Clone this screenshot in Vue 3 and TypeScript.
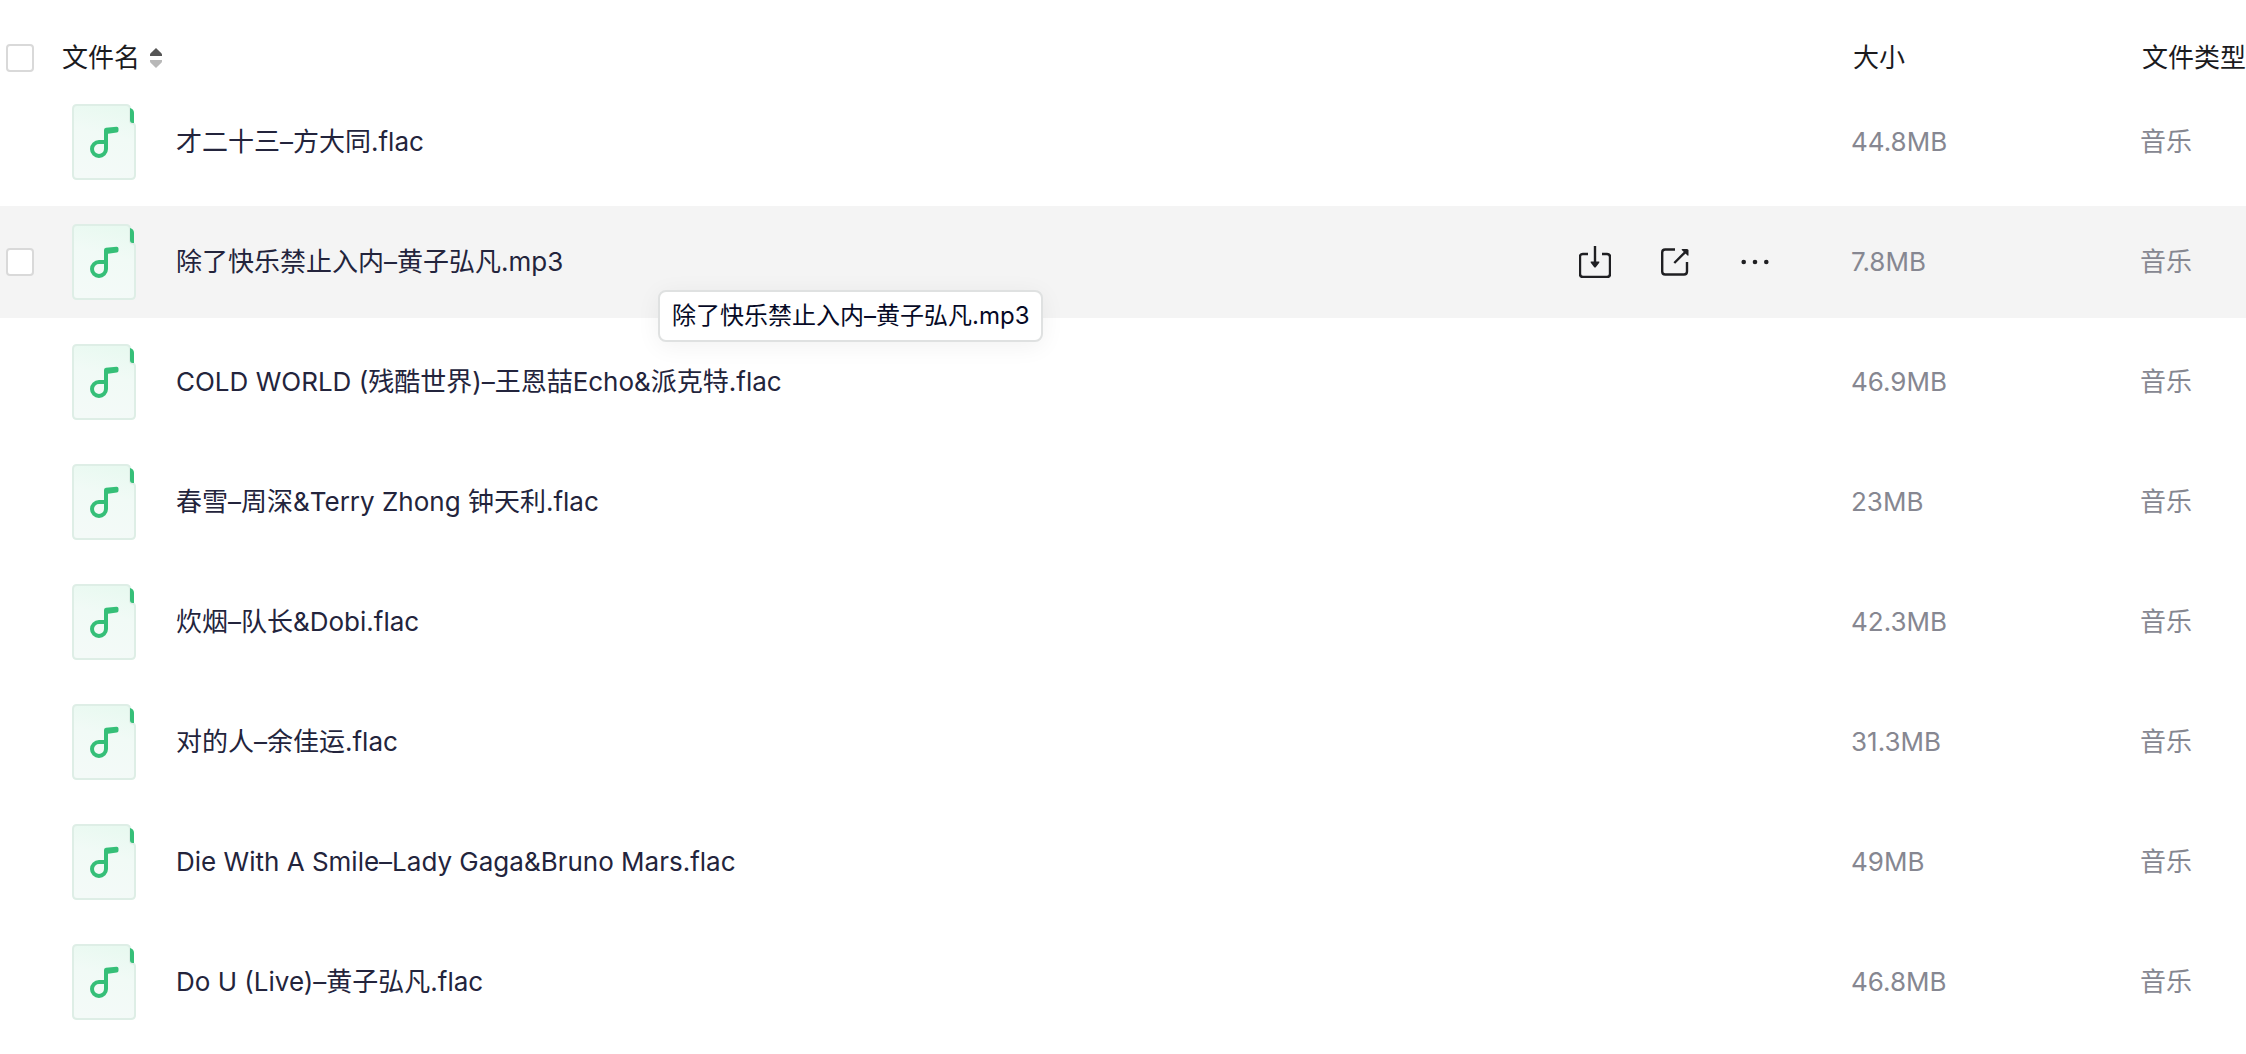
<script setup lang="ts">
import { ref } from 'vue'

interface FileRow {
  id: number
  name: string
  size: string
  type: string
}

const files: FileRow[] = [
  { id: 1, name: '才二十三–方大同.flac', size: '44.8MB', type: '音乐' },
  { id: 2, name: '除了快乐禁止入内–黄子弘凡.mp3', size: '7.8MB', type: '音乐' },
  { id: 3, name: 'COLD WORLD (残酷世界)–王恩喆Echo&派克特.flac', size: '46.9MB', type: '音乐' },
  { id: 4, name: '春雪–周深&Terry Zhong 钟天利.flac', size: '23MB', type: '音乐' },
  { id: 5, name: '炊烟–队长&Dobi.flac', size: '42.3MB', type: '音乐' },
  { id: 6, name: '对的人–余佳运.flac', size: '31.3MB', type: '音乐' },
  { id: 7, name: 'Die With A Smile–Lady Gaga&Bruno Mars.flac', size: '49MB', type: '音乐' },
  { id: 8, name: 'Do U (Live)–黄子弘凡.flac', size: '46.8MB', type: '音乐' },
]

const activeId = ref(2)
const selected = ref<number[]>([])

function toggleAll(event: Event) {
  const checked = (event.target as HTMLInputElement).checked
  selected.value = checked ? files.map((f) => f.id) : []
}
</script>

<template>
  <main class="file-list">
    <table>
      <colgroup>
        <col class="col-check" />
        <col />
        <col class="col-size" />
        <col class="col-type" />
      </colgroup>
      <thead>
        <tr>
          <th class="check-cell">
            <input
              type="checkbox"
              aria-label="全选"
              :checked="selected.length === files.length"
              @change="toggleAll"
            />
          </th>
          <th>
            <button class="sort" type="button">
              文件名
              <svg width="12" height="20" viewBox="0 0 12 20" aria-hidden="true">
                <path d="M6 0 11.4 5.2Q12 6 12 7v1H0V7Q0 6 .6 5.2Z" fill="#555" />
                <path d="M6 20 11.4 14.8Q12 14 12 13v-1H0v1q0 1 .6 1.8Z" fill="#b8b8b8" />
              </svg>
            </button>
          </th>
          <th class="head-size">大小</th>
          <th class="head-type">文件类型</th>
        </tr>
      </thead>
      <tbody>
        <tr
          v-for="file in files"
          :key="file.id"
          :class="{ active: file.id === activeId }"
          @mouseenter="activeId = file.id"
        >
          <td class="check-cell">
            <input
              v-if="file.id === activeId || selected.includes(file.id)"
              v-model="selected"
              type="checkbox"
              :value="file.id"
              :aria-label="file.name"
            />
          </td>
          <td>
            <div class="file">
              <svg class="file-icon" width="64" height="76" viewBox="0 0 64 76" aria-hidden="true">
                <defs>
                  <linearGradient :id="`paper-${file.id}`" x1="0.6" y1="0" x2="0.4" y2="1">
                    <stop offset="0" stop-color="#e8f9f0" />
                    <stop offset="0.4" stop-color="#f1faf6" />
                    <stop offset="1" stop-color="#f4faf8" />
                  </linearGradient>
                </defs>
                <path
                  d="M5 1H54q4 0 4 4V16q0 3.500 3 3.500 2 .5 2 3V71q0 4-4 4H5q-4 0-4-4V5q0-4 4-4Z"
                  :fill="`url(#paper-${file.id})`"
                  stroke="#deeee6"
                  stroke-width="2"
                />
                <path d="M58 4q4 1 4 5V19H60.500Q58 19 58 16Z" fill="#36bf78" />
                <path
                  d="M34 45a7 7 0 1 1-7-7h7Z"
                  fill="none"
                  stroke="#36bf78"
                  stroke-width="4"
                />
                <path
                  d="M32 45V26q0-2 2-2.200L44.500 22.800Q46.500 22.700 46.500 24.500V26.500Q46.500 28.300 44.800 28.500L36 29.700V45Z"
                  fill="#36bf78"
                />
              </svg>
              <span class="file-name">{{ file.name }}</span>
              <div v-if="file.id === activeId" class="actions">
                <button type="button" aria-label="下载">
                  <svg width="32" height="32" viewBox="0 0 32 32">
                    <path
                      d="M9 8H4Q1 8 1 11V28q0 3 3 3H28q3 0 3-3V11q0-3-3-3H23M16 0V17"
                      fill="none"
                      stroke="#1f1f22"
                      stroke-width="2.400"
                    />
                    <path d="M12.300 15.500h7.400q1.300 0 .5 1.200L17 20.900q-1 1.200-2 0L11.800 16.700q-.8-1.200.5-1.200Z" fill="#1f1f22" />
                  </svg>
                </button>
                <button type="button" aria-label="分享">
                  <svg width="32" height="32" viewBox="0 0 32 32">
                    <path
                      d="M16 3.500H6.200q-3 0-3 3V25.500q0 3 3 3H25q3 0 3-3V16M15.300 17 27 5.300"
                      fill="none"
                      stroke="#1f1f22"
                      stroke-width="2.400"
                    />
                    <path d="M23.300 3H28q1.500 0 1.500 1.500V9q0 1.200-1 .4L22.800 4q-.6-1 .5-1Z" fill="#1f1f22" />
                  </svg>
                </button>
                <button type="button" aria-label="更多">
                  <svg width="32" height="32" viewBox="0 0 32 32" fill="#1f1f22">
                    <circle cx="4.700" cy="16" r="2.300" />
                    <circle cx="16" cy="16" r="2.300" />
                    <circle cx="27.300" cy="16" r="2.300" />
                  </svg>
                </button>
              </div>
              <div v-if="file.id === activeId" class="tooltip" role="tooltip">{{ file.name }}</div>
            </div>
          </td>
          <td class="meta">{{ file.size }}</td>
          <td class="meta">{{ file.type }}</td>
        </tr>
      </tbody>
    </table>
  </main>
</template>

<style>
body {
  margin: 0;
  background: #fff;
}
</style>

<style scoped>
.file-list {
  overflow-x: hidden;
  font-family: Inter, "Noto Sans CJK SC", sans-serif;
  font-size: 26px;
  line-height: 40px;
  color: #23243c;
}

table {
  width: 100%;
  table-layout: fixed;
  border-collapse: separate;
  border-spacing: 0 8px;
}

.col-check {
  width: 62px;
}

.col-size {
  width: 289px;
}

.col-type {
  width: 106px;
}

th,
td {
  padding: 0;
  text-align: left;
  font-weight: 400;
  white-space: nowrap;
}

th {
  height: 40px;
  padding-top: 30px;
  color: #1b1b1e;
}

.head-size,
.head-type {
  padding-left: 2px;
}

td {
  height: 112px;
}

.active td {
  background: #f4f4f4;
}

.check-cell {
  padding-left: 6px;
}

input[type='checkbox'] {
  display: block;
  box-sizing: border-box;
  width: 28px;
  height: 28px;
  margin: 0;
  appearance: none;
  background: #fff;
  border: 2px solid #d9d9d9;
  border-radius: 4px;
}

input[type='checkbox']:checked {
  background: #36bf78;
  border-color: #36bf78;
}

button {
  padding: 0;
  border: 0;
  background: none;
  font: inherit;
  color: inherit;
  cursor: pointer;
}

.sort {
  display: flex;
  align-items: center;
  gap: 10px;
}

.file {
  position: relative;
  display: flex;
  align-items: center;
  padding: 0 56px 0 10px;
}

.file-icon {
  flex: none;
  margin-right: 40px;
}

.file-name {
  flex: 1;
  overflow: hidden;
  text-overflow: ellipsis;
}

.actions {
  display: flex;
}

.actions button {
  display: flex;
  align-items: center;
  justify-content: center;
  width: 80px;
  height: 40px;
}

.tooltip {
  position: absolute;
  top: 66px;
  left: 596px;
  z-index: 1;
  padding: 4px 12px;
  border: 2px solid #dfe1e1;
  border-radius: 8px;
  background: #fff;
  box-shadow: 0 4px 24px rgba(0, 0, 0, 0.06);
  font-size: 24px;
  color: #060a26;
}

.meta {
  color: #868791;
}
</style>
